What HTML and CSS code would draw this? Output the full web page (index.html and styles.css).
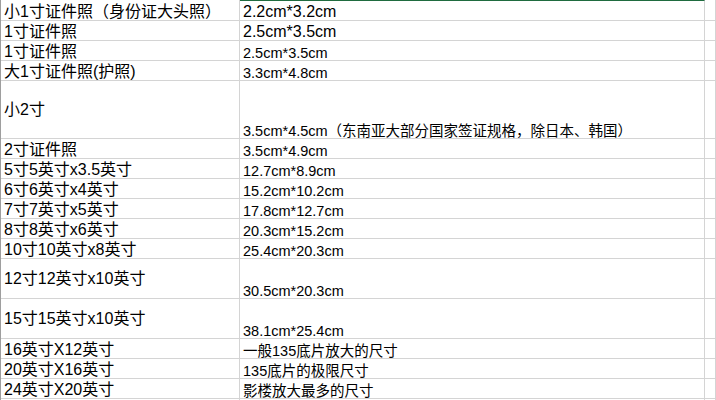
FILE: index.html
```html
<!DOCTYPE html>
<html lang="zh-CN">
<head>
<meta charset="utf-8">
<title>照片尺寸</title>
<link rel="stylesheet" href="styles.css">
</head>
<body>
<div class="sheet">
  <div class="c first lg">小1寸证件照（身份证大头照）</div>
  <div class="c first top lg">2.2cm*3.2cm</div>
  <div class="c first"></div>

  <div class="c lg">1寸证件照</div>
  <div class="c lg">2.5cm*3.5cm</div>
  <div class="c"></div>

  <div class="c lg">1寸证件照</div>
  <div class="c sm">2.5cm*3.5cm</div>
  <div class="c"></div>

  <div class="c lg">大1寸证件照(护照)</div>
  <div class="c sm">3.3cm*4.8cm</div>
  <div class="c"></div>

  <div class="c lg tall mid">小2寸</div>
  <div class="c sm tall">3.5cm*4.5cm（东南亚大部分国家签证规格，除日本、韩国）</div>
  <div class="c tall"></div>

  <div class="c lg">2寸证件照</div>
  <div class="c sm">3.5cm*4.9cm</div>
  <div class="c"></div>

  <div class="c lg">5寸5英寸x3.5英寸</div>
  <div class="c sm">12.7cm*8.9cm</div>
  <div class="c"></div>

  <div class="c lg">6寸6英寸x4英寸</div>
  <div class="c sm">15.2cm*10.2cm</div>
  <div class="c"></div>

  <div class="c lg">7寸7英寸x5英寸</div>
  <div class="c sm">17.8cm*12.7cm</div>
  <div class="c"></div>

  <div class="c lg">8寸8英寸x6英寸</div>
  <div class="c sm">20.3cm*15.2cm</div>
  <div class="c"></div>

  <div class="c lg">10寸10英寸x8英寸</div>
  <div class="c sm">25.4cm*20.3cm</div>
  <div class="c"></div>

  <div class="c lg medium mid">12寸12英寸x10英寸</div>
  <div class="c sm medium">30.5cm*20.3cm</div>
  <div class="c medium"></div>

  <div class="c lg medium mid">15寸15英寸x10英寸</div>
  <div class="c sm medium">38.1cm*25.4cm</div>
  <div class="c medium"></div>

  <div class="c lg">16英寸X12英寸</div>
  <div class="c sm">一般135底片放大的尺寸</div>
  <div class="c"></div>

  <div class="c lg">20英寸X16英寸</div>
  <div class="c sm">135底片的极限尺寸</div>
  <div class="c"></div>

  <div class="c lg">24英寸X20英寸</div>
  <div class="c sm">影楼放大最多的尺寸</div>
  <div class="c"></div>

  <div class="c"></div>
  <div class="c"></div>
  <div class="c"></div>
</div>
</body>
</html>
```

FILE: styles.css
```css
html, body {
  margin: 0;
  padding: 0;
  background: #ffffff;
}

.sheet {
  display: grid;
  grid-template-columns: 239px 465px 1fr;
  border-left: 1px solid #9e9e9e;
  width: 715px;
  overflow: hidden;
  font-family: "Liberation Sans", "Noto Sans CJK SC", sans-serif;
  color: #000000;
  text-spacing-trim: space-all;
}

.c {
  box-sizing: border-box;
  height: 20px;
  border-right: 1px solid #d4d4d4;
  border-bottom: 1px solid #d4d4d4;
  display: flex;
  align-items: flex-end;
  padding: 0 0 0 3px;
  white-space: nowrap;
  overflow: hidden;
}

.first {
  height: 21px;
}

.top {
  border-top: 1px solid #1f6b3f;
}

.lg {
  font-size: 16px;
  line-height: 16px;
}

.sm {
  font-size: 14.5px;
  line-height: 14px;
}

.tall {
  height: 58px;
}

.medium {
  height: 40px;
}

.mid {
  align-items: center;
}
```
